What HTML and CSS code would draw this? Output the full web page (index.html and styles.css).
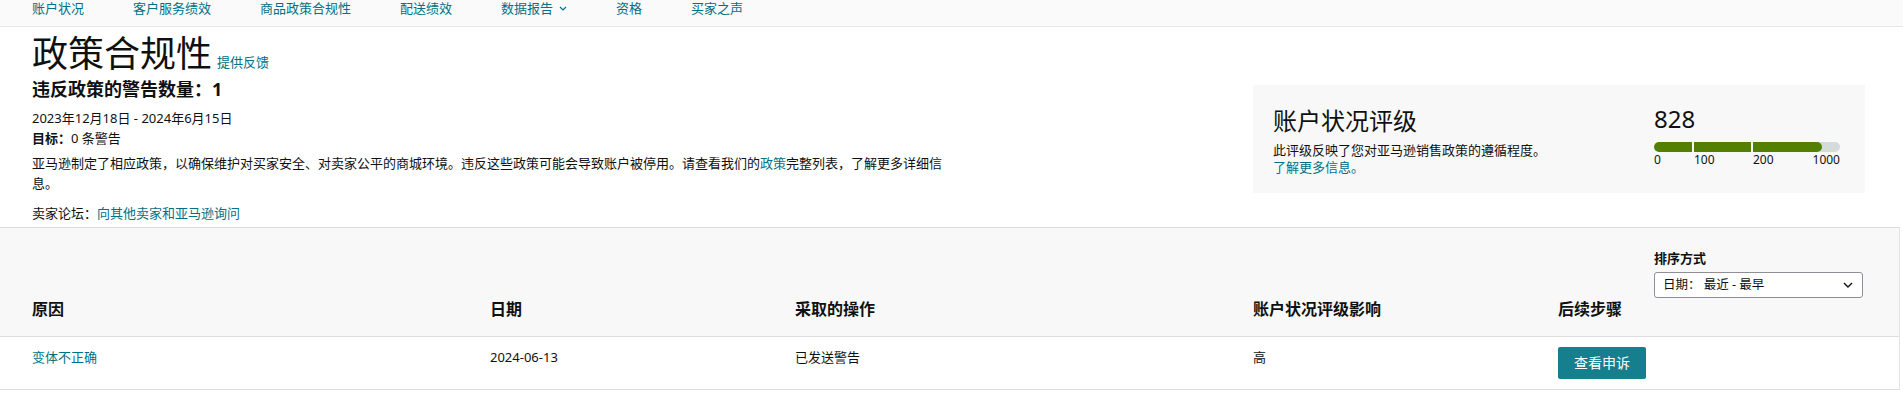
FILE: index.html
```html
<!DOCTYPE html>
<html lang="zh-CN">
<head>
<meta charset="utf-8">
<title>政策合规性</title>
<link rel="stylesheet" href="styles.css">
</head>
<body>
<nav class="subnav">
  <a href="#">账户状况</a>
  <a href="#">客户服务绩效</a>
  <a href="#">商品政策合规性</a>
  <a href="#">配送绩效</a>
  <a href="#">数据报告<svg class="nav-chev" width="8" height="5" viewBox="0 0 8 5"><path d="M1 1l3 3 3-3" fill="none" stroke="#007185" stroke-width="1.2"/></svg></a>
  <a href="#">资格</a>
  <a href="#">买家之声</a>
</nav>

<section class="summary">
  <div class="summary-main">
    <h1>政策合规性<a class="feedback" href="#">提供反馈</a></h1>
    <h2 class="count">违反政策的警告数量：1</h2>
    <p class="date">2023年12月18日 - 2024年6月15日</p>
    <p class="goal"><b>目标：</b>0 条警告</p>
    <p class="desc">亚马逊制定了相应政策，以确保维护对买家安全、对卖家公平的商城环境。违反这些政策可能会导致账户被停用。请查看我们的<a href="#">政策</a>完整列表，了解更多详细信息。</p>
    <p class="forum">卖家论坛：<a href="#">向其他卖家和亚马逊询问</a></p>
  </div>
  <aside class="card">
    <div class="card-info">
      <h3>账户状况评级</h3>
      <p>此评级反映了您对亚马逊销售政策的遵循程度。<br><a href="#">了解更多信息。</a></p>
    </div>
    <div class="score">
      <div class="score-num">828</div>
      <div class="bar">
        <div class="seg seg1"></div>
        <div class="seg seg2"></div>
        <div class="seg seg3"><div class="fill" style="width:79%"></div></div>
      </div>
      <div class="scale">
        <span class="l1">0</span>
        <span class="l2">100</span>
        <span class="l3"><span>200</span><span>1000</span></span>
      </div>
    </div>
  </aside>
</section>

<section class="table">
  <div class="table-head">
    <div class="sort">
      <div class="sort-label">排序方式</div>
      <div class="select"><span>日期：&nbsp;最近 - 最早</span><svg width="10" height="6" viewBox="0 0 10 6"><path d="M1 1l4 4 4-4" fill="none" stroke="#0f1111" stroke-width="1.4"/></svg></div>
    </div>
    <div class="grid head-row">
      <div>原因</div>
      <div>日期</div>
      <div>采取的操作</div>
      <div>账户状况评级影响</div>
      <div>后续步骤</div>
    </div>
  </div>
  <div class="grid body-row">
    <div><a href="#">变体不正确</a></div>
    <div>2024-06-13</div>
    <div>已发送警告</div>
    <div>高</div>
    <div><button class="btn" type="button">查看申诉</button></div>
  </div>
</section>
</body>
</html>
```
FILE: styles.css
```css
* { box-sizing: border-box; margin: 0; padding: 0; }
body {
  font-family: "Noto Sans", "Noto Sans CJK SC", sans-serif;
  font-size: 13px;
  line-height: 20px;
  color: #0f1111;
  background: #fff;
}
a { color: #007185; text-decoration: none; }

.subnav {
  display: flex;
  gap: 49px;
  padding: 0 0 9px 32px;
  line-height: 17px;
  background: #fafafa;
  border-bottom: 1px solid #e7e7e7;
}
.subnav a { display: flex; align-items: center; }
.nav-chev { margin-left: 6px; }

.summary {
  display: flex;
  justify-content: space-between;
  padding: 5px 38px 4px 32px;
}
.summary-main { width: 916px; }
h1 {
  font-size: 36px;
  font-weight: 400;
  line-height: 44px;
  color: #0f1111;
}
h1 .feedback { font-size: 13px; line-height: 1; margin-left: 5px; }
.count { font-size: 18px; font-weight: 700; line-height: 24px; margin-top: 1px; }
.date { margin-top: 7px; }
.goal b { font-weight: 700; }
.desc { margin-top: 5px; }
.forum { margin-top: 10px; }

.card {
  width: 612px;
  margin-top: 53px;
  align-self: flex-start;
  background: #f8f8f8;
  display: flex;
  padding: 19px 0 17px 20px;
}
.card-info { width: 381px; padding-top: 2px; }
.card-info h3 { font-size: 24px; font-weight: 400; line-height: 30px; color: #0f1111; }
.card-info p { margin-top: 6px; line-height: 17px; }
.score { width: 186px; }
.score-num { font-size: 24px; line-height: 30px; color: #0f1111; }
.bar { display: flex; gap: 2px; height: 10px; margin-top: 8px; }
.seg { height: 10px; background: #538000; }
.seg1 { width: 38px; border-radius: 5px 0 0 5px; }
.seg2 { width: 57px; }
.seg3 { flex: 1; background: #d5dbdb; border-radius: 0 5px 5px 0; overflow: hidden; }
.fill { height: 10px; background: #538000; border-radius: 0 5px 5px 0; }
.scale { display: flex; font-size: 12px; line-height: 16px; }
.scale .l1 { width: 40px; }
.scale .l2 { width: 59px; }
.scale .l3 { flex: 1; display: flex; justify-content: space-between; }

.table {
  margin-right: 3px;
  border-top: 1px solid #dddddd;
  border-right: 1px solid #e3e3e3;
}
.table-head {
  background: #f8f8f8;
  padding-top: 21px;
  border-bottom: 1px solid #dddddd;
}
.sort { width: 209px; margin-left: auto; margin-right: 36px; }
.sort-label { font-weight: 700; line-height: 18px; }
.select {
  margin-top: 5px;
  height: 26px;
  border: 1px solid #8d9096;
  border-radius: 3px;
  background: #fff;
  display: flex;
  align-items: center;
  justify-content: space-between;
  padding: 0 9px 0 8px;
  font-size: 12.5px;
}
.grid {
  display: grid;
  grid-template-columns: 458px 305px 458px 305px 1fr;
  align-items: start;
}
.grid > div { padding-left: 32px; }
.head-row { font-size: 16px; font-weight: 700; line-height: 22px; padding-bottom: 16px; }
.body-row { padding: 10px 0; border-bottom: 1px solid #dddddd; }
.btn {
  height: 32px;
  padding: 0 16px;
  border: none;
  border-radius: 2px;
  background: #167f8d;
  color: #fff;
  font-family: inherit;
  font-size: 14px;
  line-height: 32px;
  cursor: pointer;
}
```
